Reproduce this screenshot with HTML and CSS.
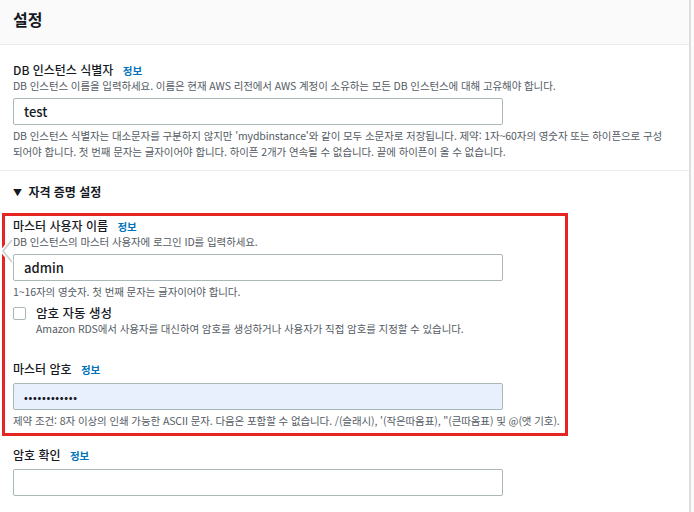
FILE: index.html
```html
<!DOCTYPE html>
<html lang="ko">
<head>
<meta charset="utf-8">
<link rel="stylesheet" href="styles.css">
</head>
<body>
<div class="page">
  <div class="panel">
    <div class="header">설정</div>
    <div class="section first">
      <div class="label">DB 인스턴스 식별자 <span class="info">정보</span></div>
      <div class="desc">DB 인스턴스 이름을 입력하세요. 이름은 현재 AWS 리전에서 AWS 계정이 소유하는 모든 DB 인스턴스에 대해 고유해야 합니다.</div>
      <div class="input">test</div>
      <div class="help">DB 인스턴스 식별자는 대소문자를 구분하지 않지만 'mydbinstance'와 같이 모두 소문자로 저장됩니다. 제약: 1자~60자의 영숫자 또는 하이픈으로 구성<br>되어야 합니다. 첫 번째 문자는 글자이어야 합니다. 하이픈 2개가 연속될 수 없습니다. 끝에 하이픈이 올 수 없습니다.</div>
    </div>
    <div class="section second">
      <div class="expander"><span class="caret">▼</span> 자격 증명 설정</div>
      <div class="highlight">
        <div class="label">마스터 사용자 이름 <span class="info">정보</span></div>
        <div class="desc">DB 인스턴스의 마스터 사용자에 로그인 ID를 입력하세요.</div>
        <div class="input">admin</div>
        <div class="help">1~16자의 영숫자. 첫 번째 문자는 글자이어야 합니다.</div>
        <div class="check-row">
          <span class="checkbox"></span>
          <div class="check-text">
            <div class="check-label">암호 자동 생성</div>
            <div class="desc">Amazon RDS에서 사용자를 대신하여 암호를 생성하거나 사용자가 직접 암호를 지정할 수 있습니다.</div>
          </div>
        </div>
        <div class="label pw-label">마스터 암호 <span class="info">정보</span></div>
        <div class="input autofill">••••••••••••</div>
        <div class="help">제약 조건: 8자 이상의 인쇄 가능한 ASCII 문자. 다음은 포함할 수 없습니다. /(슬래시), '(작은따옴표), "(큰따옴표) 및 @(앳 기호).</div>
      </div>
      <div class="label confirm-label">암호 확인 <span class="info">정보</span></div>
      <div class="input"></div>
    </div>
    <svg class="chevron" width="14" height="26" viewBox="0 0 14 26"><polyline points="12,2 3,13 12,24" fill="none" stroke="#ffffff" stroke-width="5"/><polyline points="12,2 3,13 12,24" fill="none" stroke="#c8cccc" stroke-width="1.5"/></svg>
  </div>
  <div class="side"></div>
</div>
</body>
</html>
```
FILE: styles.css
```css
html, body {
  margin: 0;
  padding: 0;
  background: #ffffff;
}
body {
  font-family: "Noto Sans CJK KR", "Noto Sans", "Liberation Sans", sans-serif;
  color: #16191f;
  width: 694px;
  height: 512px;
  overflow: hidden;
}
.page {
  display: flex;
  height: 512px;
}
.panel {
  position: relative;
  width: 689px;
  border-right: 2px solid #dcdedf;
  background: #ffffff;
}
.side {
  flex: 1;
  background: #fbfbfb;
}
.header {
  height: 44px;
  line-height: 38px;
  background: #fafafa;
  border-bottom: 1px solid #eaeded;
  padding-left: 13px;
  font-size: 16px;
  font-weight: 700;
}
.section {
  padding-left: 13px;
}
.section.first {
  padding-top: 17px;
  padding-bottom: 10px;
  border-bottom: 1px solid #eaeded;
}
.section.second {
  padding-top: 13px;
  padding-left: 0;
}
.section.second > .label,
.section.second > .input {
  margin-left: 13px;
}
.label {
  font-size: 12px;
  line-height: 16px;
  font-weight: 500;
}
.info {
  color: #0073bb;
  font-size: 10.5px;
  font-weight: 700;
  margin-left: 6px;
}
.desc {
  font-size: 10.5px;
  line-height: 14px;
  color: #545b64;
  letter-spacing: -0.1px;
}
.input {
  box-sizing: border-box;
  width: 490px;
  height: 27px;
  margin-top: 5px;
  border: 1px solid #aab7b8;
  border-radius: 2px;
  padding-left: 10px;
  font-size: 13px;
  line-height: 25px;
  font-weight: 500;
  background: #ffffff;
}
.input.autofill {
  background: #e8f0fe;
  font-size: 10px;
  font-weight: 700;
  letter-spacing: 0.7px;
}
.help {
  margin-top: 3px;
  font-size: 10.5px;
  line-height: 16px;
  color: #545b64;
  letter-spacing: -0.1px;
}
.expander {
  margin-left: 13px;
  font-size: 12px;
  line-height: 16px;
  font-weight: 700;
  color: #16191f;
}
.caret {
  font-size: 9px;
  margin-right: 3px;
  vertical-align: 1px;
}
.highlight {
  margin-top: 12px;
  margin-left: 2px;
  width: 552px;
  border: 3px solid #e52521;
  padding: 2px 0 4px 8px;
}
.check-row {
  display: flex;
  gap: 10px;
  margin-top: 4px;
}
.checkbox {
  box-sizing: border-box;
  width: 13px;
  height: 13px;
  margin-top: 3px;
  border: 1px solid #aab7b8;
  border-radius: 2px;
  flex: none;
}
.check-label {
  font-size: 12.5px;
  line-height: 18px;
  font-weight: 500;
}
.pw-label {
  margin-top: 25px;
}
.confirm-label {
  margin-top: 11px;
}
.chevron {
  position: absolute;
  left: 0;
  top: 238px;
}
```
